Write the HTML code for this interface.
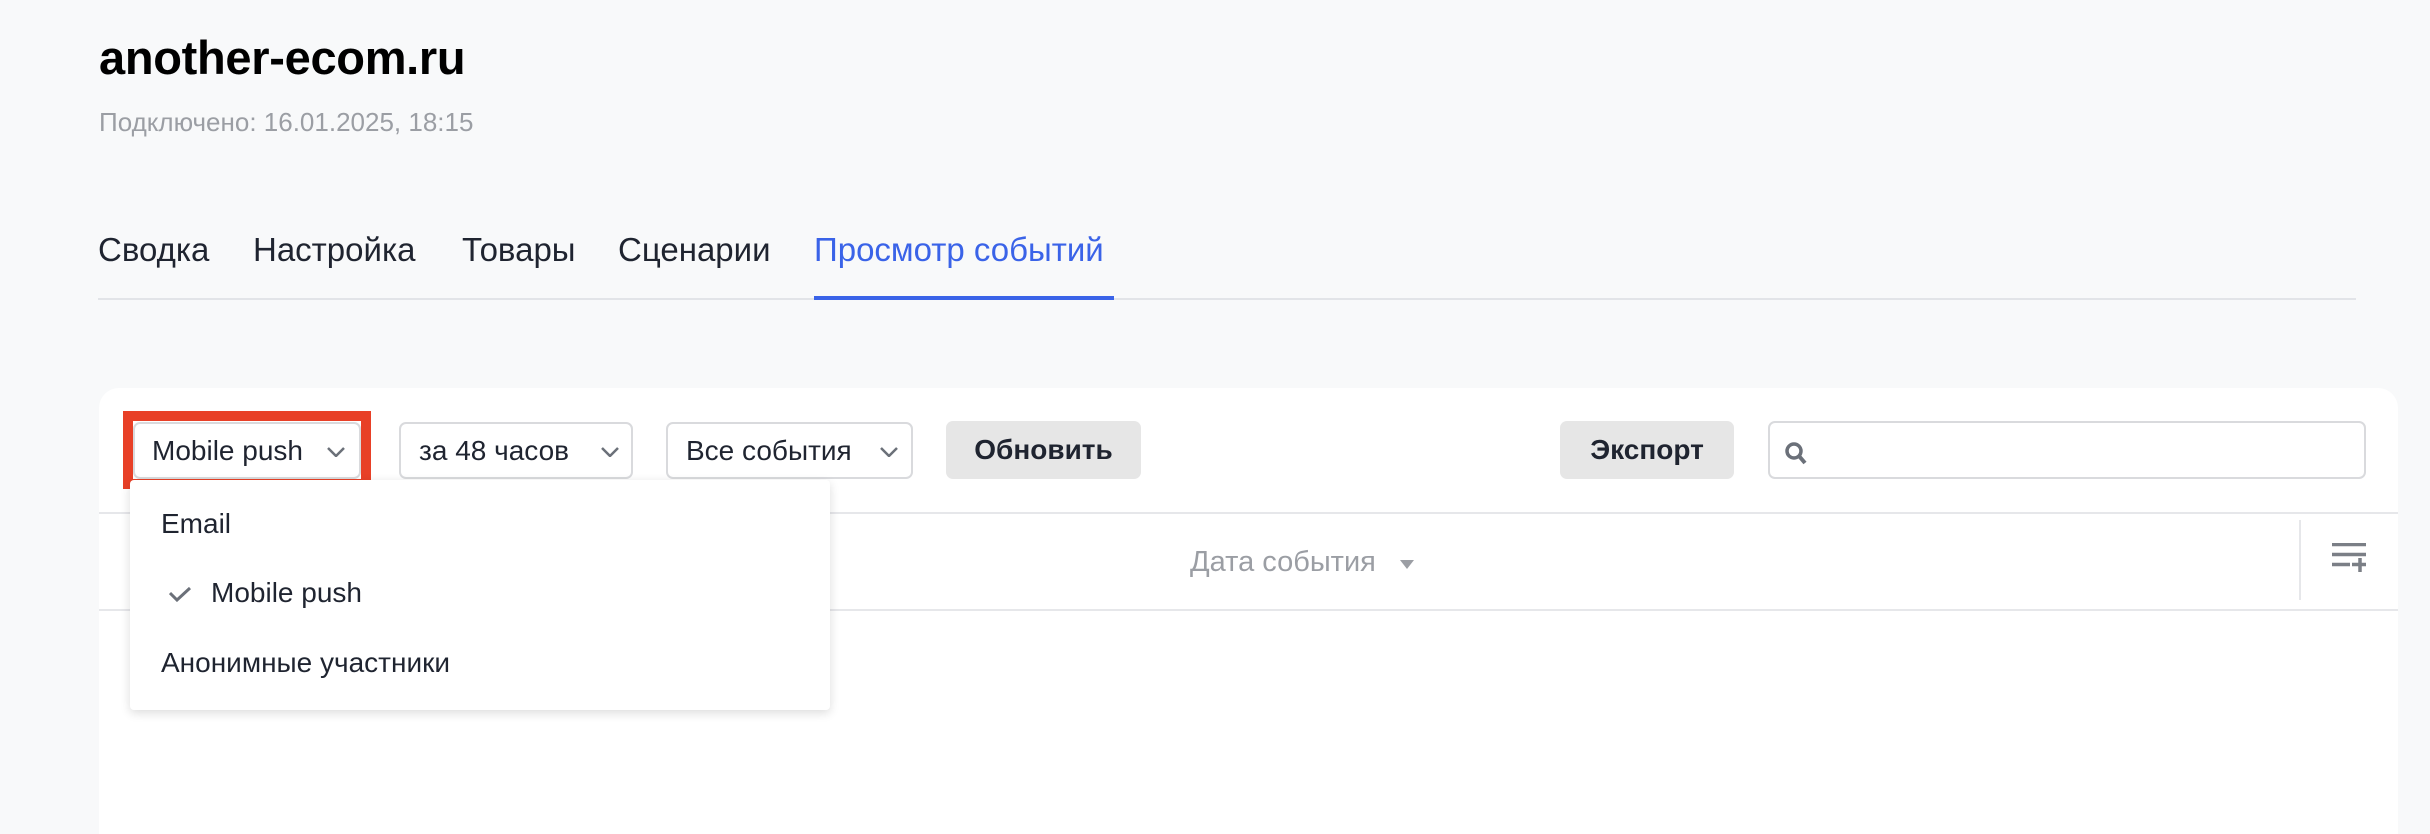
<!DOCTYPE html>
<html style="width:2430px;height:834px;overflow:hidden"><head><meta charset="utf-8"><style>
*{box-sizing:border-box;margin:0;padding:0}
body{width:2430px;height:834px;background:#f8f9fa;font-family:"Liberation Sans",sans-serif;position:relative;overflow:hidden;color:#1f2430}
.a{position:absolute;white-space:nowrap}
.sel{position:absolute;top:422px;height:57px;border:2px solid #d9dadd;border-radius:7px;background:#fff;font-size:28px;line-height:53px;padding-left:18px;color:#1f2430}
.btn{position:absolute;top:421px;height:58px;background:#e6e6e6;border-radius:7px;font-size:28px;font-weight:bold;line-height:58px;text-align:center;color:#1f2430}
.chev{position:absolute;top:23px;width:18px;height:10px}
.tab{position:absolute;top:231px;font-size:33px;color:#1f2430;white-space:nowrap}
</style></head><body>
<div class="a" style="left:99px;top:30px;font-size:47px;font-weight:bold;color:#000;letter-spacing:-0.3px">another-ecom.ru</div>
<div class="a" style="left:99px;top:107px;font-size:26px;color:#9b9ea4">Подключено: 16.01.2025, 18:15</div>
<div class="tab" style="left:98px">Сводка</div>
<div class="tab" style="left:253px">Настройка</div>
<div class="tab" style="left:462px">Товары</div>
<div class="tab" style="left:618px">Сценарии</div>
<div class="tab" style="left:814px;color:#3a63e8">Просмотр событий</div>
<div class="a" style="left:98px;top:298px;width:2258px;height:2px;background:#e2e4e8"></div>
<div class="a" style="left:814px;top:296px;width:300px;height:4px;background:#3a63e8"></div>

<div class="a" style="left:99px;top:388px;width:2299px;height:446px;background:#fff;border-radius:20px 20px 0 0"></div>
<div class="a" style="left:99px;top:512px;width:2299px;height:2px;background:#e6e7ea"></div>
<div class="a" style="left:99px;top:609px;width:2299px;height:2px;background:#e6e7ea"></div>
<div class="a" style="left:2299px;top:520px;width:2px;height:80px;background:#e6e7ea"></div>
<div class="a" style="left:1190px;top:546px;font-size:29px;color:#9b9ea4">Дата события</div>
<svg class="a" style="left:1400px;top:560px" width="14" height="10"><path d="M0 0H14L7 9Z" fill="#9b9ea4"/></svg>
<svg class="a" style="left:2332px;top:543px" width="34" height="29"><path d="M0 1.5H34M0 11.5H34M0 21.5H18M20 21.5H34M28 15V29" stroke="#7b7f86" stroke-width="3.5"/></svg>

<div class="a" style="left:123px;top:411px;width:248px;height:78px;border:10px solid #e84027"></div>
<div class="sel" style="left:133px;width:228px;padding-left:17px">Mobile push<svg class="chev" style="left:192px" viewBox="0 0 18 10"><path d="M1 1L9 9L17 1" fill="none" stroke="#6b7079" stroke-width="2.5"/></svg></div>
<div class="sel" style="left:399px;width:234px">за 48 часов<svg class="chev" style="left:200px" viewBox="0 0 18 10"><path d="M1 1L9 9L17 1" fill="none" stroke="#6b7079" stroke-width="2.5"/></svg></div>
<div class="sel" style="left:666px;width:247px">Все события<svg class="chev" style="left:212px" viewBox="0 0 18 10"><path d="M1 1L9 9L17 1" fill="none" stroke="#6b7079" stroke-width="2.5"/></svg></div>
<div class="btn" style="left:946px;width:195px">Обновить</div>
<div class="btn" style="left:1560px;width:174px">Экспорт</div>
<div class="a" style="left:1768px;top:421px;width:598px;height:58px;border:2px solid #d9dadd;border-radius:7px;background:#fff"></div>
<svg class="a" style="left:1784px;top:441px" width="28" height="24"><circle cx="10" cy="10" r="7" fill="none" stroke="#6b7079" stroke-width="3.5"/><path d="M15 15L21 22" stroke="#6b7079" stroke-width="4"/></svg>

<div class="a" style="left:130px;top:480px;width:700px;height:230px;background:#fff;border-radius:4px;box-shadow:0 3px 10px rgba(0,0,0,0.14)"></div>
<div class="a" style="left:161px;top:508px;font-size:28px;color:#1f2430">Email</div>
<svg class="a" style="left:169px;top:587px" width="22" height="15"><path d="M1 6L8 13L21 1" fill="none" stroke="#6b7079" stroke-width="3"/></svg>
<div class="a" style="left:211px;top:577px;font-size:28px;color:#1f2430">Mobile push</div>
<div class="a" style="left:161px;top:647px;font-size:28px;color:#1f2430">Анонимные участники</div>
</body></html>
